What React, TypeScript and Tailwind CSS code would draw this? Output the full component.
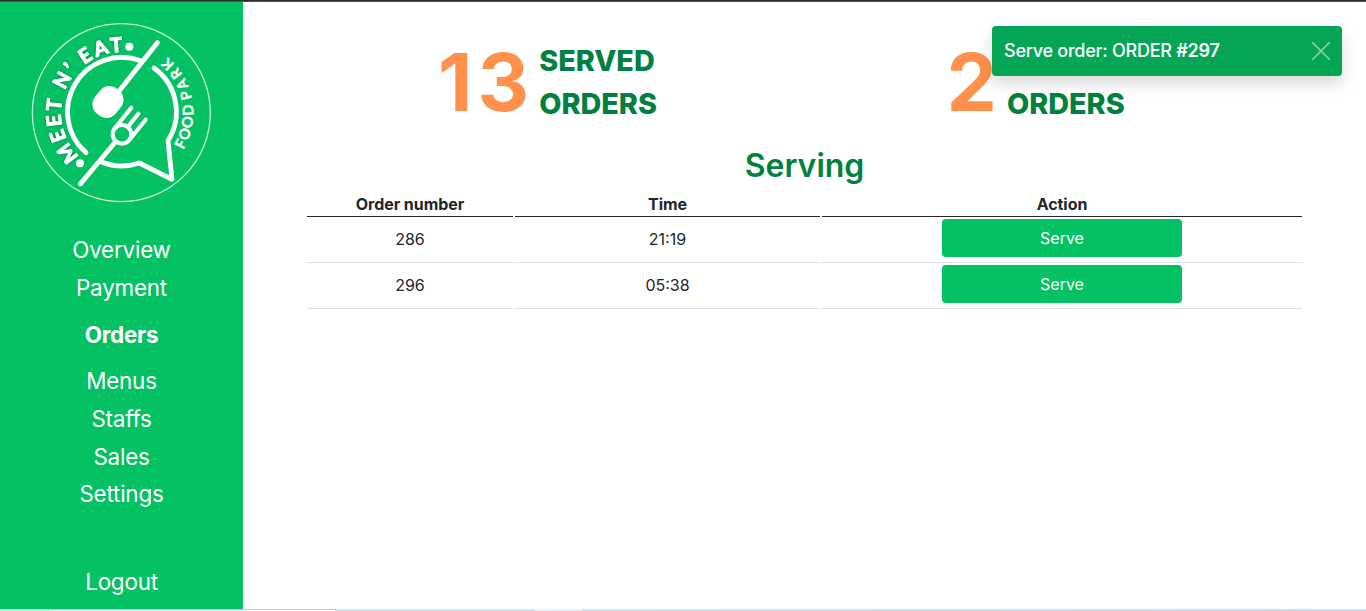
const nav = [
  { label: 'Overview', cls: 'h-[38px] leading-[38px]' },
  { label: 'Payment', cls: 'h-[38px] leading-[38px]' },
  { label: 'Orders', cls: 'h-[56px] leading-[56px] font-bold' },
  { label: 'Menus', cls: 'h-[37px] leading-[36px]' },
  { label: 'Staffs', cls: 'h-[38px] leading-[38px]' },
  { label: 'Sales', cls: 'h-[38px] leading-[38px]' },
  { label: 'Settings', cls: 'h-[37px] leading-[36px]' },
];

const orders = [
  { id: '286', time: '21:19' },
  { id: '296', time: '05:38' },
];

function Logo() {
  return (
    <svg viewBox="33 69 540 540" className="mr-[2px] h-[180px] w-[180px]" fill="none" stroke="white" strokeLinecap="round" strokeLinejoin="round">
      <defs>
        <path id="arc-left" d="M177.6 468.9 A182 182 0 1 1 486 338" />
        <path id="arc-right" d="M489.3 449.4 A216 216 0 0 0 304 122" />
      </defs>
      <circle cx="304" cy="338" r="267" strokeWidth="4" strokeOpacity=".75" />
      <g strokeWidth="14.5">
        <path d="M198 458 A163.3 163.3 0 0 1 362 182" />
        <path d="M402 204 A162 162 0 0 1 444 422 L456 538 L358 489 A162 162 0 0 1 243 485" />
        <path d="M412 128 L298 272" />
        <path d="M181 552 L286 426" />
      </g>
      <rect x="224" y="258" width="80" height="96" rx="36" transform="rotate(39 264 306)" fill="white" stroke="none" />
      <g strokeWidth="12">
        <circle cx="306" cy="403" r="28" />
        <path d="M334 323 L282 388" />
        <path d="M355 341 L324 380" />
        <path d="M377 359 L331 416" />
      </g>
      <g fill="white">
        <circle cx="180" cy="490" r="12" stroke="none" />
        <circle cx="328" cy="140" r="12" stroke="none" />
        <text className="font-['Lato'] text-[60px] font-bold drop-shadow-[0_0_4px_rgba(0,0,0,0.3)]" strokeWidth="3.5">
          <textPath href="#arc-left" textLength="436">MEET N’ EAT</textPath>
        </text>
        <text className="font-['Lato'] text-[44px] font-bold" strokeWidth="1">
          <textPath href="#arc-right" textLength="142">FOOD</textPath>
        </text>
        <text className="font-['Lato'] text-[43px] font-bold" strokeWidth="1">
          <textPath href="#arc-right" startOffset="160" textLength="146">PARK</textPath>
        </text>
      </g>
    </svg>
  );
}

function Stat({ value, top }: { value: string; top: string }) {
  return (
    <div className="flex items-center">
      <div className="text-[80px] font-bold leading-[86px] tracking-[5px] text-[#ff914d]">{value}</div>
      <div className="ml-[5px] text-[28.8px] font-extrabold leading-[43px] text-[#008140]">
        <div>{top}</div>
        <div>ORDERS</div>
      </div>
    </div>
  );
}

const row = 'grid grid-cols-[206px_305px_480px] gap-[2px] text-center';

export default function App() {
  return (
    <div className="flex h-[611px] w-[1366px] flex-col overflow-hidden bg-white font-['Inter',sans-serif] text-[#212529]">
      <div className="h-px bg-[#303030]" />
      <div className="h-px bg-[#505050]" />
      <div className="flex h-[607px]">
        <aside className="flex w-[243px] flex-col items-center bg-[#04c164] pt-[21px] text-[22.4px] text-white">
          <Logo />
          <nav className="mt-[28px] flex flex-col text-center tracking-[-0.2px]">
            {nav.map((n) => (
              <a key={n.label} className={n.cls}>{n.label}</a>
            ))}
          </nav>
          <a className="mt-[50px] leading-[38px] tracking-[-0.2px]">Logout</a>
        </aside>
        <main className="flex flex-1 flex-col pl-16">
          <div className="mt-[37px] flex h-[86px] w-[995px]">
            <div className="flex w-1/2 pl-[131px]"><Stat value="13" top="SERVED" /></div>
            <div className="flex w-1/2 pl-[142px]"><Stat value="2" top="SERVING" /></div>
          </div>
          <h2 className="mt-[22px] h-[38px] w-[995px] text-center text-[32px] font-[570] leading-[38px] text-[#008140]">Serving</h2>
          <div className="mt-[7px] w-[995px] text-base">
            <div className={row}>
              {['Order number', 'Time', 'Action'].map((h) => (
                <div key={h} className="h-[25px] border-b border-[#212529] font-bold leading-6 tracking-[-0.05px]">{h}</div>
              ))}
            </div>
            {orders.map((o) => (
              <div key={o.id} className={row}>
                <div className="h-[46px] border-b border-[#dee2e6] leading-[45px]">{o.id}</div>
                <div className="h-[46px] border-b border-[#dee2e6] leading-[45px]">{o.time}</div>
                <div className="flex h-[46px] justify-center border-b border-[#dee2e6] pt-[2px]">
                  <button className="h-[38px] w-[240px] rounded bg-[#04c164] text-white">Serve</button>
                </div>
              </div>
            ))}
          </div>
        </main>
      </div>
      <div className="flex h-[2px]">
        <div className="w-[48px] bg-[#cfe5ed]" />
        <div className="w-[288px] border-l border-r border-t border-[#c8c8c8] bg-white" />
        <div className="w-[198px] bg-[#cfe5ed]" />
        <div className="w-[48px] bg-[#e8f4f8]" />
        <div className="flex-1 bg-gradient-to-r from-[#cfe5ed] to-[#d0dae8]" />
      </div>
      <div className="absolute left-[992px] top-[26px] flex h-[50px] w-[350px] items-center justify-between rounded bg-[#04a656] px-3 text-white shadow-[0_8px_16px_rgba(0,0,0,0.15)]">
        <span className="text-lg font-medium tracking-[-0.25px]">Serve order: ORDER <b className="font-semibold">#297</b></span>
        <svg viewBox="0 0 18 18" className="h-[18px] w-[18px]" stroke="white" strokeOpacity=".55" strokeWidth="1.6" strokeLinecap="round">
          <path d="M.75.75 17.25 17.25M17.25.75.75 17.25" />
        </svg>
      </div>
    </div>
  );
}
